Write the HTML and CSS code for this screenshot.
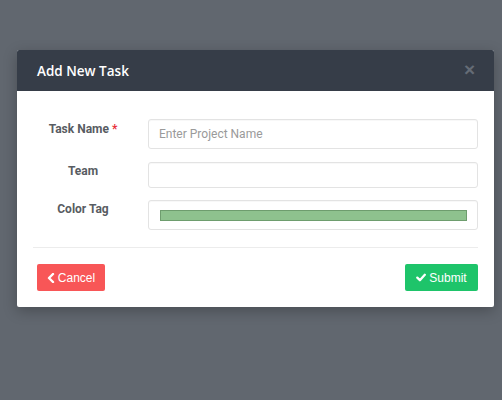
FILE: index.html
```html
<!DOCTYPE html>
<html>
<head>
<meta charset="utf-8">
<link rel="stylesheet" href="styles.css">
</head>
<body>
<div class="page">
  <div class="modal">
    <div class="modal-header">
      <h4 class="modal-title">Add New Task</h4>
      <span class="close">&times;</span>
    </div>
    <div class="modal-body">
      <div class="row row-1">
        <label class="label">Task Name <span class="req">*</span></label>
        <div class="input input-tall"><span class="placeholder">Enter Project Name</span></div>
      </div>
      <div class="row row-2">
        <label class="label">Team</label>
        <div class="input input-short"></div>
      </div>
      <div class="row row-3">
        <label class="label">Color Tag</label>
        <div class="input input-tall input-color"><span class="swatch"></span></div>
      </div>
      <div class="divider"></div>
    </div>
    <div class="modal-footer">
      <button class="btn btn-cancel">
        <svg class="icon" width="8" height="10" viewBox="0 0 8 10"><path d="M6 1 L2 5 L6 9" fill="none" stroke="#fff" stroke-width="2.4" stroke-linecap="round" stroke-linejoin="round"/></svg>
        Cancel
      </button>
      <button class="btn btn-submit">
        <svg class="icon" width="10" height="9" viewBox="0 0 10 9"><path d="M1.3 4.6 L3.9 7.2 L8.8 1.8" fill="none" stroke="#fff" stroke-width="2.3" stroke-linecap="round" stroke-linejoin="round"/></svg>
        Submit
      </button>
    </div>
  </div>
</div>
</body>
</html>
```
FILE: styles.css
```css
html, body {
  margin: 0;
  padding: 0;
}
body {
  width: 502px;
  height: 400px;
  background: #61676f;
  font-family: Roboto, "Liberation Sans", Arial, sans-serif;
  overflow: hidden;
}
.page {
  padding: 50px 8px 0 17px;
}
.modal {
  width: 477px;
  background: #fff;
  border-radius: 2px;
  box-shadow: 0 4px 14px rgba(0, 0, 0, 0.25);
  overflow: hidden;
}
.modal-header {
  height: 41px;
  background: #363d48;
  display: flex;
  align-items: center;
  justify-content: space-between;
  padding: 0 19px 0 20px;
}
.modal-title {
  margin: 0;
  color: #fff;
  font-family: "Open Sans", sans-serif;
  font-weight: 600;
  font-size: 13.5px;
}
.close {
  color: #656c76;
  font-size: 19px;
  font-weight: bold;
  line-height: 1;
  margin-top: -2px;
  font-family: "Liberation Sans", Arial, sans-serif;
}
.modal-body {
  padding: 28px 16px 0 16px;
}
.row {
  display: flex;
  gap: 15px;
}
.row-1 { margin-bottom: 13px; }
.row-2 { margin-bottom: 12px; }
.label {
  width: 100px;
  flex: none;
  text-align: center;
  font-size: 12px;
  font-weight: bold;
  color: #585c62;
  line-height: 16px;
  padding-top: 1px;
}
.row-1 .label { padding-top: 2px; }
.req {
  color: #e8303a;
}
.input {
  flex: 1;
  box-sizing: border-box;
  border: 1px solid #e3e3e3;
  border-radius: 3px;
  box-shadow: inset 0 1px 1px rgba(0, 0, 0, 0.03);
  display: flex;
  align-items: center;
  padding: 0 10px;
}
.input-tall { height: 30px; }
.input-short { height: 26px; }
.placeholder {
  font-size: 12px;
  color: #9a9a9a;
}
.input-color {
  padding: 0 10px 0 11px;
}
.swatch {
  flex: 1;
  height: 11px;
  box-sizing: border-box;
  background: #8ec28e;
  border: 1px solid #6e9d6e;
  margin-top: 1px;
}
.divider {
  height: 1px;
  background: #ececec;
  margin: 17px 0 0 0;
}
.modal-footer {
  display: flex;
  justify-content: space-between;
  padding: 16px 16px 16px 20px;
}
.btn {
  height: 27px;
  border: none;
  border-radius: 2px;
  color: #fff;
  font-family: "Liberation Sans", Arial, sans-serif;
  font-size: 12px;
  display: flex;
  align-items: center;
  justify-content: center;
  gap: 3px;
  padding: 0;
}
.btn-cancel {
  width: 68px;
  background: #f85657;
}
.btn-submit {
  width: 73px;
  background: #1ec46a;
}
.icon {
  display: block;
}
```
